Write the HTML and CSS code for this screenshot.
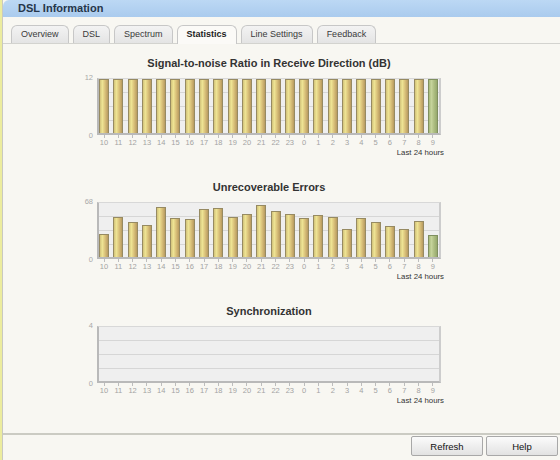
FILE: index.html
```html
<!DOCTYPE html>
<html lang="en">
<head>
  <meta charset="UTF-8">
  <title>DSL Information</title>
  <link rel="stylesheet" href="styles.css">
</head>
<body>
  <div class="window">
    <header class="title-bar">
      <h1>DSL Information</h1>
    </header>

    <!-- Onglets -->
    <nav class="tabs">
      <a class="tab">Overview</a>
      <a class="tab">DSL</a>
      <a class="tab">Spectrum</a>
      <a class="tab active">Statistics</a>
      <a class="tab">Line Settings</a>
      <a class="tab">Feedback</a>
    </nav>

    <main class="content">
      <!-- SNR -->
      <section class="chart">
        <h2 class="chart-title">Signal-to-noise Ratio in Receive Direction (dB)</h2>
        <div class="y-axis"><span>12</span><span>0</span></div>
        <div class="plot">
          <div class="bar" style="height:100%"></div>
          <div class="bar" style="height:100%"></div>
          <div class="bar" style="height:100%"></div>
          <div class="bar" style="height:100%"></div>
          <div class="bar" style="height:100%"></div>
          <div class="bar" style="height:100%"></div>
          <div class="bar" style="height:100%"></div>
          <div class="bar" style="height:100%"></div>
          <div class="bar" style="height:100%"></div>
          <div class="bar" style="height:100%"></div>
          <div class="bar" style="height:100%"></div>
          <div class="bar" style="height:100%"></div>
          <div class="bar" style="height:100%"></div>
          <div class="bar" style="height:100%"></div>
          <div class="bar" style="height:100%"></div>
          <div class="bar" style="height:100%"></div>
          <div class="bar" style="height:100%"></div>
          <div class="bar" style="height:100%"></div>
          <div class="bar" style="height:100%"></div>
          <div class="bar" style="height:100%"></div>
          <div class="bar" style="height:100%"></div>
          <div class="bar" style="height:100%"></div>
          <div class="bar" style="height:100%"></div>
          <div class="bar current" style="height:100%"></div>
        </div>
        <div class="x-labels">
          <span>10</span><span>11</span><span>12</span><span>13</span><span>14</span><span>15</span>
          <span>16</span><span>17</span><span>18</span><span>19</span><span>20</span><span>21</span>
          <span>22</span><span>23</span><span>0</span><span>1</span><span>2</span><span>3</span>
          <span>4</span><span>5</span><span>6</span><span>7</span><span>8</span><span>9</span>
        </div>
        <div class="x-caption">Last 24 hours</div>
      </section>

      <!-- Erreurs -->
      <section class="chart">
        <h2 class="chart-title">Unrecoverable Errors</h2>
        <div class="y-axis"><span>68</span><span>0</span></div>
        <div class="plot">
          <div class="bar" style="height:42%"></div>
          <div class="bar" style="height:75%"></div>
          <div class="bar" style="height:65%"></div>
          <div class="bar" style="height:59%"></div>
          <div class="bar" style="height:93%"></div>
          <div class="bar" style="height:73%"></div>
          <div class="bar" style="height:71%"></div>
          <div class="bar" style="height:88%"></div>
          <div class="bar" style="height:91%"></div>
          <div class="bar" style="height:74%"></div>
          <div class="bar" style="height:80%"></div>
          <div class="bar" style="height:97%"></div>
          <div class="bar" style="height:86%"></div>
          <div class="bar" style="height:80%"></div>
          <div class="bar" style="height:72%"></div>
          <div class="bar" style="height:77%"></div>
          <div class="bar" style="height:75%"></div>
          <div class="bar" style="height:52%"></div>
          <div class="bar" style="height:72%"></div>
          <div class="bar" style="height:65%"></div>
          <div class="bar" style="height:58%"></div>
          <div class="bar" style="height:51%"></div>
          <div class="bar" style="height:66%"></div>
          <div class="bar current" style="height:40%"></div>
        </div>
        <div class="x-labels">
          <span>10</span><span>11</span><span>12</span><span>13</span><span>14</span><span>15</span>
          <span>16</span><span>17</span><span>18</span><span>19</span><span>20</span><span>21</span>
          <span>22</span><span>23</span><span>0</span><span>1</span><span>2</span><span>3</span>
          <span>4</span><span>5</span><span>6</span><span>7</span><span>8</span><span>9</span>
        </div>
        <div class="x-caption">Last 24 hours</div>
      </section>

      <!-- Synchronisation (vide) -->
      <section class="chart">
        <h2 class="chart-title">Synchronization</h2>
        <div class="y-axis"><span>4</span><span>0</span></div>
        <div class="plot"></div>
        <div class="x-labels">
          <span>10</span><span>11</span><span>12</span><span>13</span><span>14</span><span>15</span>
          <span>16</span><span>17</span><span>18</span><span>19</span><span>20</span><span>21</span>
          <span>22</span><span>23</span><span>0</span><span>1</span><span>2</span><span>3</span>
          <span>4</span><span>5</span><span>6</span><span>7</span><span>8</span><span>9</span>
        </div>
        <div class="x-caption">Last 24 hours</div>
      </section>
    </main>

    <footer class="actions">
      <button class="btn">Refresh</button>
      <button class="btn">Help</button>
    </footer>
  </div>
</body>
</html>
```

FILE: styles.css
```css
/* ------------------------------
   Base
   ------------------------------ */
:root {
  --page-bg: #f8f7f2;
  --text-color: #333333;
  --axis-color: #b9b9b9;
  --plot-bg: #efefef;
  --grid-color: #d6d6d6;
}

* {
  margin: 0;
  padding: 0;
  box-sizing: border-box;
}

body {
  background: linear-gradient(to right, #ecec9e 2px, var(--page-bg) 2px);
  color: var(--text-color);
  font-family: "Liberation Sans", Arial, sans-serif;
}

.window {
  margin-left: 2px;
  height: 100vh;
  border-left: 1px solid #c9c9c1;
  background-color: var(--page-bg);
  display: flex;
  flex-direction: column;
}

/* ------------------------------
   Barre de titre
   ------------------------------ */
.title-bar {
  height: 17px;
  border-top-left-radius: 6px;
  background: linear-gradient(#bcd8f4, #aacbee);
  padding-left: 15px;
}
.title-bar h1 {
  font-size: 11px;
  line-height: 17px;
  font-weight: bold;
  color: #26364a;
}

/* ------------------------------
   Onglets
   ------------------------------ */
.tabs {
  display: flex;
  align-items: flex-end;
  gap: 4px;
  padding: 8px 0 0 8px;
  border-bottom: 1px solid #d3d3cf;
}

.tab {
  font-size: 9px;
  line-height: 17px;
  padding: 0 9px;
  color: #3a3a3a;
  background: linear-gradient(#f3f3f3, #e4e4e4);
  border: 1px solid #c7c7c7;
  border-bottom: none;
  border-radius: 6px 6px 0 0;
  cursor: pointer;
}

.tab.active {
  font-weight: bold;
  color: #222;
  background: #fbfaf7;
  padding-bottom: 1px;
  margin-bottom: -1px;
}

/* ------------------------------
   Graphiques
   ------------------------------ */
.content {
  flex: 1;
  padding-top: 12px;
}

.chart {
  display: grid;
  grid-template-columns: 13px 344px;
  column-gap: 4px;
  margin-left: 77px;
  margin-bottom: 23px;
}

.chart-title {
  grid-column: 2;
  font-size: 11px;
  line-height: 14px;
  font-weight: bold;
  text-align: center;
  color: #333;
  margin-bottom: 8px;
}

.y-axis {
  grid-column: 1;
  display: flex;
  flex-direction: column;
  justify-content: space-between;
  align-items: flex-end;
  margin: -4px 0 -5px;
  font-size: 7.5px;
  line-height: 8px;
  color: #a9a9a9;
}

.plot {
  grid-column: 2;
  height: 57px;
  display: flex;
  align-items: flex-end;
  gap: 4.3px;
  background-color: var(--plot-bg);
  background-image: repeating-linear-gradient(to bottom, transparent 0 13px, var(--grid-color) 13px 14px);
  border-top: 1px solid #d8d8d8;
  border-left: 2px solid var(--axis-color);
  border-bottom: 2px solid var(--axis-color);
  border-right: 2px solid #cdcdcd;
}

.bar {
  width: 10px;
  flex: 0 0 10px;
  background: linear-gradient(90deg, #d2c27a 0%, #eee494 30%, #dcc47c 60%, #b89a60 100%);
  border: 1px solid #968a62;
  border-bottom: none;
}
.bar.current {
  background: linear-gradient(90deg, #a6b979 0%, #c6d49c 30%, #b0c084 60%, #96a86c 100%);
  border-color: #7f8f60;
}

.x-labels {
  grid-column: 2;
  display: flex;
  gap: 4.3px;
  padding-left: 2px;
  font-size: 7.5px;
  line-height: 9px;
  color: #a3a3a3;
}
.x-labels span {
  flex: 0 0 10px;
  text-align: center;
  padding-top: 3px;
  background: linear-gradient(#bdbdbd, #bdbdbd) center top / 1px 3px no-repeat;
}

.x-caption {
  grid-column: 2;
  text-align: right;
  margin-right: -3px;
  margin-top: 1px;
  font-size: 7.8px;
  line-height: 9px;
  color: #333;
}

/* ------------------------------
   Boutons
   ------------------------------ */
.actions {
  display: flex;
  justify-content: flex-end;
  gap: 3px;
  padding: 1px 2px 4px;
  border-top: 2px solid #cbcbc3;
}

.btn {
  width: 72px;
  height: 20px;
  font-family: "Liberation Sans", Arial, sans-serif;
  font-size: 9.5px;
  color: #111;
  background: linear-gradient(#fbfbfb, #e2e2e2);
  border: 1px solid #a8a8a8;
  border-radius: 2px;
  cursor: pointer;
}
```
